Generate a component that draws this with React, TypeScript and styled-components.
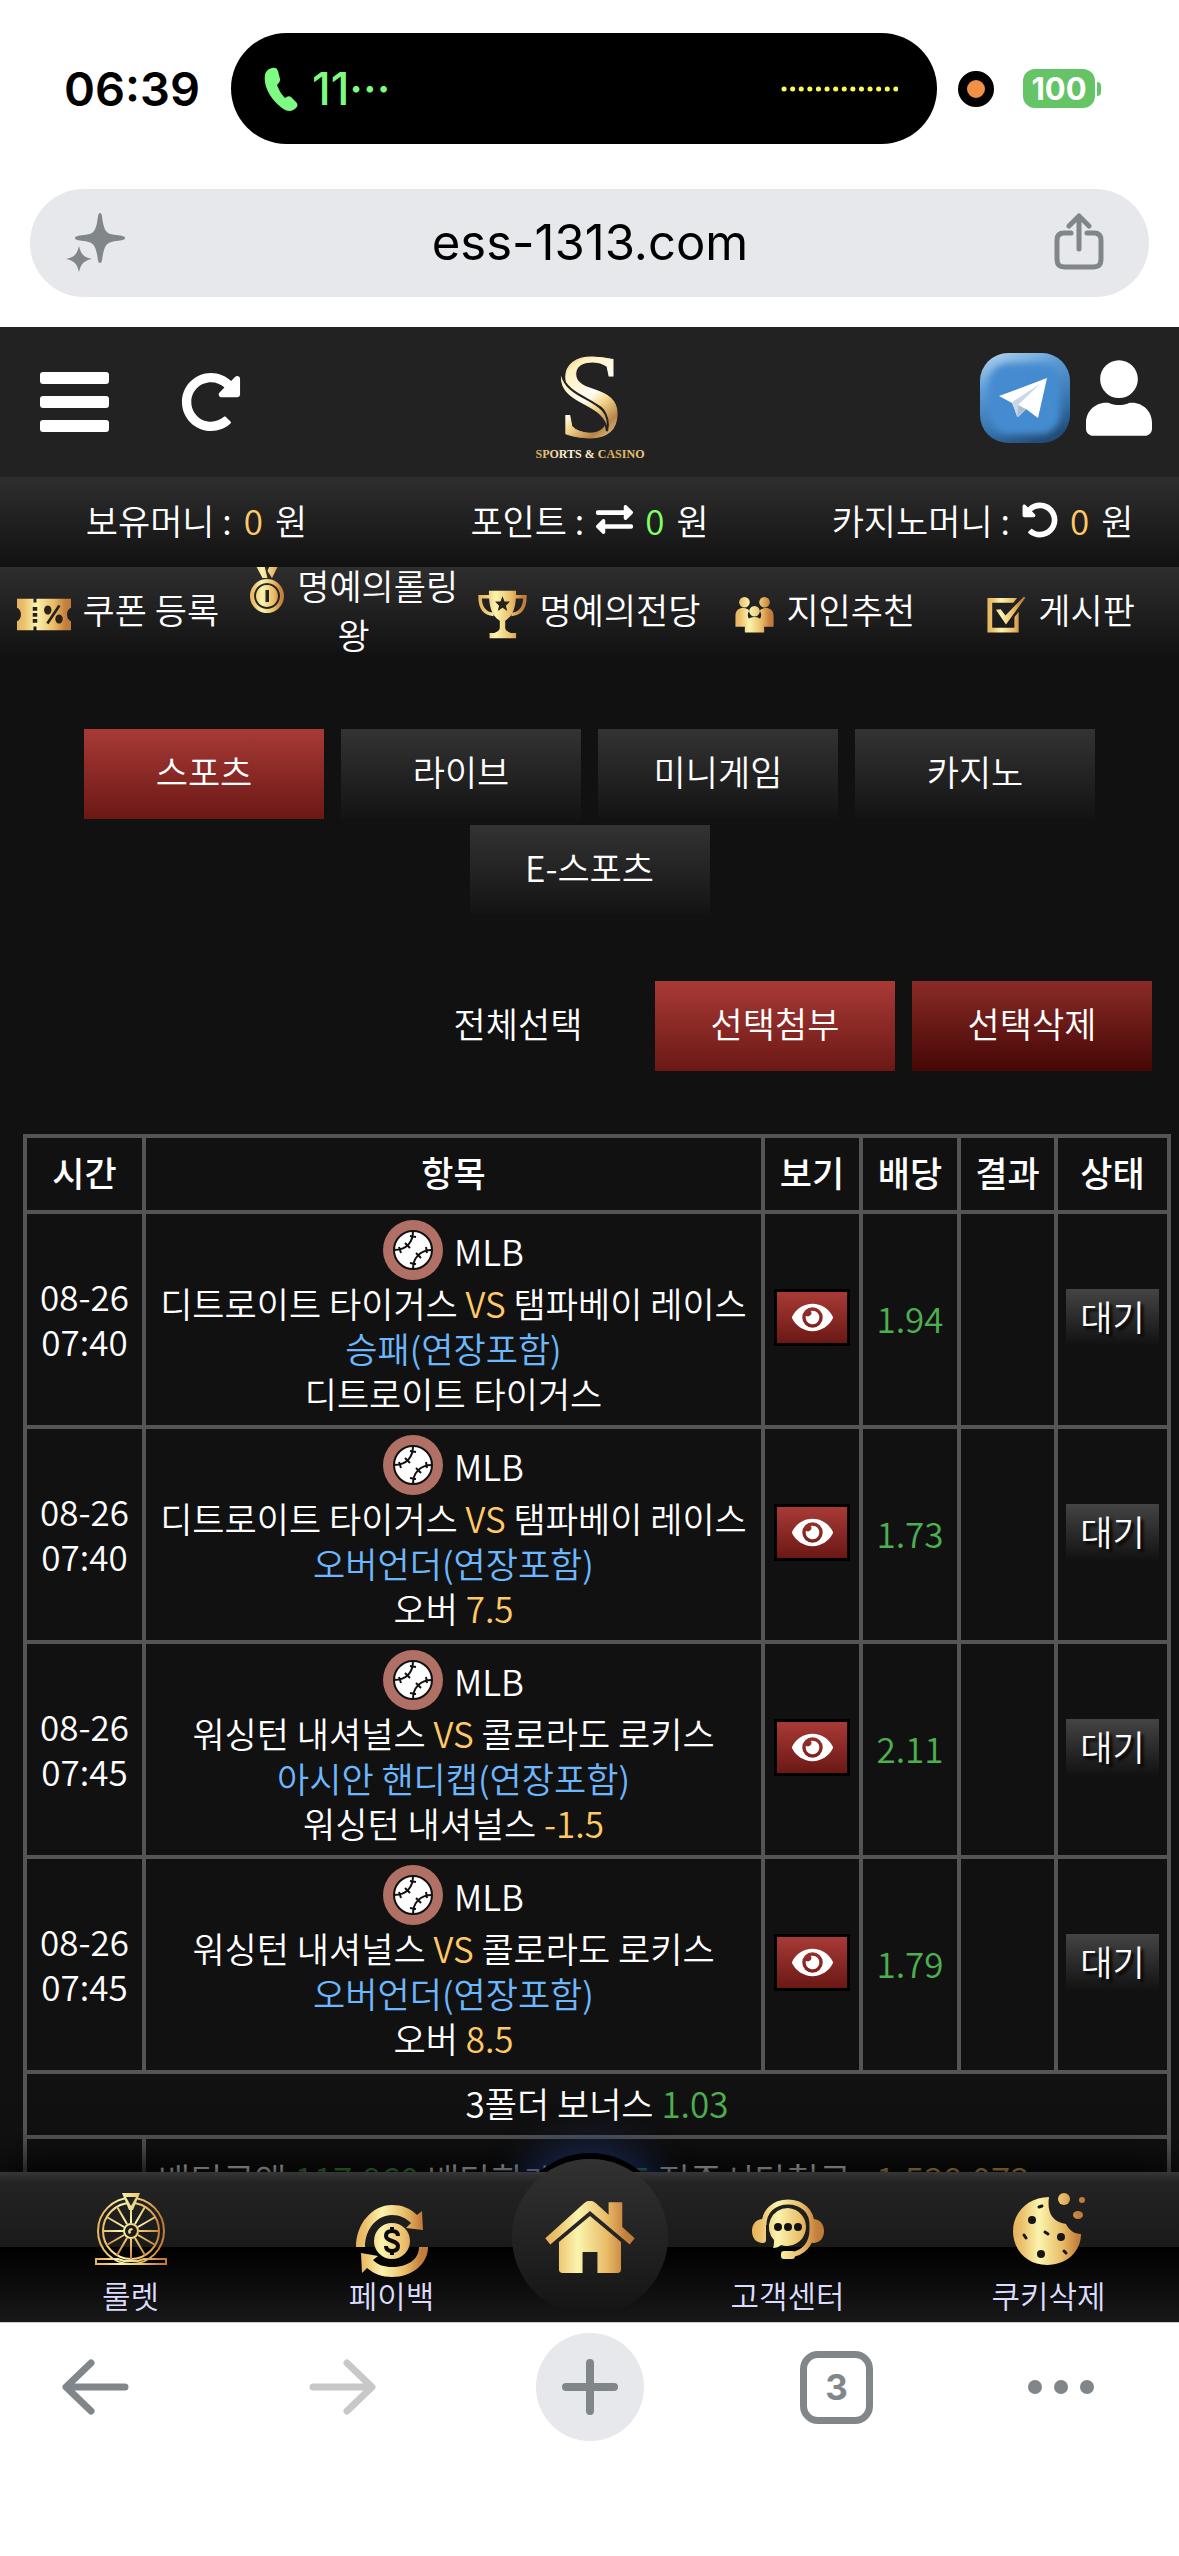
import { Fragment, ReactNode } from 'react';
import styled, { createGlobalStyle, css } from 'styled-components';
import { FaExchangeAlt, FaEye, FaRedoAlt, FaUndoAlt, FaUser } from 'react-icons/fa';

const LATIN_FONT = 'Inter, "Noto Sans CJK KR", sans-serif';
const KOREAN_FONT = '"Noto Sans CJK KR", "Noto Sans", sans-serif';

const COLORS = {
	page: '#111',
	header: '#222',
	line: '#555',
	gold: '#ffc966',
	lime: '#80ff66',
	green: '#4caf50',
	blue: '#6cb8ff',
	chrome: '#e7e8ec',
	chromeIcon: '#80868a',
};

const GlobalStyle = createGlobalStyle`
	* { box-sizing: border-box; }
	body {
		margin: 0;
		background: #fff;
	}
	button {
		margin: 0;
		padding: 0;
		border: 0;
		background: none;
		color: inherit;
		font: inherit;
		cursor: pointer;
	}
	a {
		color: inherit;
		text-decoration: none;
	}
	svg { display: block; }
`;

const Screen = styled.div`
	display: flex;
	flex-direction: column;
	height: 100vh;
	overflow: hidden;
	font-family: ${LATIN_FONT};
`;

/* ---------- phone status bar ---------- */

const StatusBar = styled.header`
	display: grid;
	grid-template-columns: 231px 1fr 242px;
	align-items: center;
	padding-top: 33px;
`;

const Clock = styled.time`
	padding-left: 64px;
	font-size: 47px;
	font-weight: 600;
	line-height: 60px;
`;

const Island = styled.div`
	display: flex;
	align-items: center;
	justify-content: space-between;
	height: 111px;
	padding: 0 39px 0 33px;
	border-radius: 56px;
	background: #000;
`;

const Call = styled.span`
	display: flex;
	align-items: center;
	gap: 14px;
	color: #7dfb83;
	font-size: 45px;
	font-weight: 500;
`;

const StatusRight = styled.div`
	display: flex;
	align-items: center;
	gap: 29px;
	padding-left: 21px;
`;

const MicDot = styled.span`
	width: 36px;
	height: 36px;
	border: 9px solid #000;
	border-radius: 50%;
	background: #f09145;
`;

const BatteryWrap = styled.span`
	display: flex;
	align-items: center;
	gap: 2px;
`;

const BatteryBody = styled.span`
	width: 72px;
	height: 39px;
	border-radius: 12px;
	background: #65c466;
	color: #fff;
	font-size: 31px;
	font-weight: 700;
	line-height: 39px;
	text-align: center;
`;

const BatteryTip = styled.span`
	width: 4px;
	height: 14px;
	border-radius: 0 4px 4px 0;
	background: #65c466;
`;

/* ---------- address bar ---------- */

const AddressBar = styled.div`
	display: flex;
	align-items: center;
	justify-content: space-between;
	height: 108px;
	margin: 45px 30px 30px;
	padding: 0 45px 2px 36px;
	border-radius: 54px;
	background: ${COLORS.chrome};
	color: #000;
	font-size: 49px;
`;

/* ---------- site ---------- */

const Site = styled.main`
	flex: 1;
	min-height: 0;
	overflow: hidden;
	background: ${COLORS.page};
	color: #fff;
	font-family: ${KOREAN_FONT};
	font-size: 35px;
	font-weight: 350;
	line-height: 45px;
`;

const SiteHeader = styled.div`
	display: grid;
	grid-template-columns: 1fr auto 1fr;
	align-items: center;
	height: 150px;
	padding: 0 27px;
	background: ${COLORS.header};
`;

const HeaderGroup = styled.div<{ $end?: boolean }>`
	display: flex;
	align-items: center;
	${({ $end }) => ($end ? css`
		justify-content: flex-end;
		gap: 16px;
		padding-bottom: 8px;
	` : css`
		gap: 72px;
		padding-left: 13px;
	`)}
`;

const barGradient = css`
	background: linear-gradient(#2e2e2e, #111);
`;

const MoneyBar = styled.div`
	display: grid;
	grid-template-columns: repeat(3, 1fr);
	height: 90px;
	padding-bottom: 5px;
	${barGradient}
`;

const Money = styled.div`
	display: flex;
	align-items: center;
	justify-content: center;
	gap: 12px;
`;

const MenuBar = styled.nav`
	display: grid;
	grid-template-rows: 100%;
	grid-template-columns: repeat(5, 1fr);
	align-items: center;
	height: 90px;
	padding-bottom: 7px;
	overflow: hidden;
	line-height: 49px;
	text-align: center;
	${barGradient}
	svg {
		display: inline-block;
		margin: -12px 12px -12px 0;
		vertical-align: middle;
	}
`;

const Tabs = styled.div`
	display: flex;
	flex-wrap: wrap;
	justify-content: center;
	gap: 6px 17px;
	padding-top: 72px;
`;

const Actions = styled.div`
	display: flex;
	justify-content: flex-end;
	gap: 17px;
	padding: 66px 27px 63px;
`;

const fills = {
	none: 'none',
	dark: 'linear-gradient(#333, #131313)',
	red: 'linear-gradient(#a83a36, #6b1815)',
	deep: 'linear-gradient(#8a2b28, #450704)',
};

const BoxButton = styled.button<{ $fill: keyof typeof fills }>`
	width: 240px;
	height: 90px;
	padding-bottom: 8px;
	background: ${({ $fill }) => fills[$fill]};
`;

const Gold = styled.span`
	color: ${COLORS.gold};
`;

const Lime = styled.span`
	color: ${COLORS.lime};
`;

const Green = styled.span`
	color: ${COLORS.green};
`;

const Blue = styled.span`
	color: ${COLORS.blue};
`;

/* ---------- bet table ---------- */

const BetTable = styled.table`
	width: calc(100% - 31px);
	margin-left: 23px;
	border-collapse: collapse;
	table-layout: fixed;
	text-align: center;
	white-space: nowrap;
`;

const Col = styled.col<{ $width?: number }>`
	width: ${({ $width }) => ($width ? `${$width}px` : 'auto')};
`;

const HeadCell = styled.th`
	padding: 11px 0 16px;
	border: 4px solid ${COLORS.line};
	font-weight: 500;
`;

const Cell = styled.td<{ $summary?: boolean }>`
	padding: 6px 0 10px;
	border: 4px solid ${COLORS.line};
	${({ $summary }) => $summary && css`
		padding: 17px 12px 21px;
		text-align: left;
	`}
`;

const League = styled.div`
	display: flex;
	align-items: center;
	justify-content: center;
	gap: 11px;
	height: 60px;
`;

const ViewButton = styled.button`
	display: inline-flex;
	align-items: center;
	justify-content: center;
	width: 76px;
	height: 57px;
	border: 3px solid #000;
	background: ${fills.red};
	vertical-align: middle;
`;

const Status = styled.span`
	display: inline-block;
	width: 93px;
	height: 57px;
	background: linear-gradient(#444, #111);
	line-height: 54px;
	text-shadow: 3px 3px 3px #000;
	vertical-align: middle;
`;

/* ---------- site bottom nav ---------- */

const BottomNav = styled.nav`
	position: relative;
	z-index: 1;
	display: flex;
	height: 150px;
	background:
		linear-gradient(#363636, rgba(54, 54, 54, 0) 10px),
		linear-gradient(#252525, #1a1a1a 50%, #000 50%, #181818);
	box-shadow: 0 -8px 40px #000;
	color: #dcdcff;
	font-family: ${KOREAN_FONT};
	font-size: 31px;
	font-weight: 350;
	line-height: 36px;
`;

const NavLink = styled.a`
	display: flex;
	flex: 1;
	flex-direction: column;
	align-items: center;
	padding-top: 21px;
`;

const HomeSlot = styled.div`
	position: relative;
	width: 135px;
`;

const HomeLink = styled.a`
	position: absolute;
	top: -13px;
	left: 50%;
	display: flex;
	align-items: center;
	justify-content: center;
	width: 156px;
	height: 156px;
	margin-left: -78px;
	border-radius: 50%;
	background: linear-gradient(#323232, #141414);
	&::before {
		content: '';
		position: absolute;
		inset: 0;
		z-index: -1;
		border-radius: 50%;
		box-shadow: 0 -6px 0 #000, 0 -10px 36px 6px rgba(35, 60, 130, 0.55);
		clip-path: inset(-70px -70px 143px);
	}
`;

/* ---------- browser toolbar ---------- */

const Toolbar = styled.footer`
	position: relative;
	z-index: 2;
	display: grid;
	grid-template-columns: 219px 1fr 1fr 1fr 219px;
	align-items: center;
	justify-items: center;
	padding: 10px 0 115px;
	border-top: 1px solid #ccc;
	background: #fff;
	color: ${COLORS.chromeIcon};
	> :first-child {
		justify-self: start;
		margin-left: 62px;
	}
	> :last-child {
		justify-self: end;
		margin-right: 84px;
	}
`;

const NewTab = styled.button`
	display: flex;
	align-items: center;
	justify-content: center;
	width: 108px;
	height: 108px;
	border-radius: 50%;
	background: ${COLORS.chrome};
`;

const TabCount = styled.button`
	width: 73px;
	height: 73px;
	border: 7px solid ${COLORS.chromeIcon};
	border-radius: 18px;
	font-size: 35px;
	font-weight: 700;
	line-height: 58px;
`;

/* ---------- drawings ---------- */

const GoldDefs = () => (
	<svg width="0" height="0" aria-hidden="true" style={{ position: 'absolute' }}>
		<defs>
			<linearGradient id="gold" gradientUnits="userSpaceOnUse" x1="0" y1="0" x2="72" y2="0">
				<stop offset="0" stopColor="#e6b25c" />
				<stop offset="0.12" stopColor="#ecc06a" />
				<stop offset="0.36" stopColor="#fbf4ae" />
				<stop offset="0.68" stopColor="#e9bd68" />
				<stop offset="0.9" stopColor="#c47f3c" />
				<stop offset="1" stopColor="#bd7a38" />
			</linearGradient>
			<linearGradient id="logoGold" gradientUnits="userSpaceOnUse" x1="26" y1="12" x2="94" y2="94">
				<stop offset="0" stopColor="#d9a94f" />
				<stop offset="0.2" stopColor="#fff0bd" />
				<stop offset="0.5" stopColor="#fffdf4" />
				<stop offset="0.62" stopColor="#f3d68a" />
				<stop offset="0.8" stopColor="#b9854a" />
				<stop offset="1" stopColor="#f4df9e" />
			</linearGradient>
			<linearGradient id="logoText" x1="0" y1="0" x2="1" y2="0">
				<stop offset="0" stopColor="#d9a94f" />
				<stop offset="0.3" stopColor="#fff8e0" />
				<stop offset="0.5" stopColor="#fff1c4" />
				<stop offset="0.65" stopColor="#d9a94f" />
				<stop offset="1" stopColor="#e9ca80" />
			</linearGradient>
		</defs>
	</svg>
);

type GoldIconProps = { width: number, height: number, box?: number, children: ReactNode };

const GoldIcon = ({ width, height, box = 72, children }: GoldIconProps) => (
	<svg width={width} height={height} viewBox={`0 0 72 ${box}`} fill="url(#gold)" aria-hidden="true">
		{children}
	</svg>
);

const CouponIcon = () => (
	<GoldIcon width={54} height={33} box={44}>
		<path d="M0 1h22v5h4V1h46v12c-7 2-7 16 0 18v12H26v-5h-4v5H0V31c7-2 7-16 0-18z" />
		<g fill="#2a2118">
			<path d="M21 12h6v5h-6zM21 20h6v5h-6zM21 28h6v5h-6zM55 9l3 2-16 24-3-2z" />
			<path d="M41 10a5 6 0 1 0 .1 0zM56 22a5 6 0 1 0 .1 0z" />
		</g>
	</GoldIcon>
);

const MedalIcon = () => (
	<GoldIcon width={36} height={48} box={96}>
		<path d="M14 0h17l6 24h-10zM41 0h17L46 24l-9-14z" />
		<path fillRule="evenodd" d="M36 26a34 34 0 1 1-.1 0zM36 34a26 26 0 1 0 .1 0z" />
		<path fillRule="evenodd" d="M36 38a22 22 0 1 1-.1 0zM33 48v24h7V48z" />
	</GoldIcon>
);

const TrophyIcon = () => (
	<GoldIcon width={49} height={49}>
		<path fill="none" stroke="url(#gold)" strokeWidth="5" d="M18 10H3c0 16 7 25 20 26M54 10h15c0 16-7 25-20 26" />
		<path d="M16 1h40c0 22-3 36-16 44v10c0 5 5 6 8 8h8v8H17v-8h7c4-2 8-3 8-8V45C19 37 16 23 16 1z" />
		<path fill="#2a2118" d="M36 9l3 8h8l-6 6 2 8-7-5-7 5 2-8-6-6h8z" />
	</GoldIcon>
);

const PeopleIcon = () => (
	<GoldIcon width={39} height={36} box={68}>
		<circle cx="17" cy="10" r="10" />
		<circle cx="55" cy="10" r="10" />
		<path d="M0 56V36c0-10 6-15 15-15 6 0 10 3 11 5-5 8-2 14 2 18-7 3-9 8-9 12zM72 56V36c0-10-6-15-15-15-6 0-10 3-11 5 5 8 2 14-2 18 7 3 9 8 9 12z" />
		<circle cx="36" cy="27" r="10" />
		<path d="M18 67c-2-18 5-29 18-29s20 11 18 29z" />
	</GoldIcon>
);

const CheckIcon = () => (
	<GoldIcon width={39} height={36} box={68}>
		<path d="M0 2h56l-7 9H9v47h42V38l8-10v39H0z" />
		<path d="M16 24l9-1 9 12L68 0l4 1-37 51z" />
	</GoldIcon>
);

const SPOKES = [0, 30, 60, 90, 120, 150];

const RouletteIcon = () => (
	<GoldIcon width={72} height={84} box={84}>
		<g fill="none" stroke="url(#gold)" strokeWidth="2">
			<circle cx="36" cy="38" r="33" />
			<circle cx="36" cy="38" r="28" />
			<circle cx="36" cy="38" r="7" />
			{SPOKES.map((angle) => (
				<path key={angle} d="M44 38h20M8 38h20" transform={`rotate(${angle} 36 38)`} />
			))}
			<path d="M1 66h22l6 2h14l6-2h22v5H1z" />
		</g>
		<path d="M27 0h18l-7 17h-4z" />
		<path fill="#222" d="M31 4h10l-5 9z" />
		<path d="M34 41c-2-3 0-6 3-6l1 2c-2 0-3 1-2 3z" />
	</GoldIcon>
);

const PaybackIcon = () => (
	<GoldIcon width={72} height={84} box={84}>
		<path d="M0 54c0-23 16-42 36-42 10 0 18 3 25 10l5-4 1 19-17-2 5-5c-5-5-11-8-19-8C21 22 9 36 9 54z" />
		<path d="M72 54c0 17-16 30-36 30-10 0-18-3-25-9l-5 5-1-20 17 3-5 4c5 5 11 7 19 7 15 0 27-7 27-20z" />
		<circle cx="36" cy="48" r="18" />
		<path
			fill="none"
			stroke="#0b0b0b"
			strokeWidth="4"
			d="M42 43c0-4-3-5-6-5-4 0-6 2-6 5 0 6 12 4 12 10 0 3-2 5-6 5-3 0-6-1-6-5M36 34v5M36 57v5"
		/>
	</GoldIcon>
);

const SupportIcon = () => (
	<GoldIcon width={72} height={84} box={84}>
		<path fill="none" stroke="url(#gold)" strokeWidth="5" d="M12 32C12 18 22 9 36 9s24 9 24 23v4c0 16-9 24-22 26" />
		<rect x="29" y="58" width="14" height="8" rx="3" />
		<path d="M11 26c2 0 3 1 3 3v18c0 2-1 3-3 3C4 50 0 45 0 38s4-12 11-12zM61 26c-2 0-3 1-3 3v18c0 2 1 3 3 3 7 0 11-5 11-12s-4-12-11-12z" />
		<path d="M36 15a19 19 0 1 1-7 37c-2 2-5 3-8 3 1-3 1-5 1-8A19 19 0 0 1 36 15z" />
		<g fill="#111">
			<circle cx="26" cy="34" r="4" />
			<circle cx="36" cy="34" r="4" />
			<circle cx="46" cy="34" r="4" />
		</g>
	</GoldIcon>
);

const CookieIcon = () => (
	<GoldIcon width={72} height={84} box={84}>
		<path d="M36 4c-2 14 2 25 17 27 3 6 8 10 15 10 0 17-14 31-34 31C14 72 0 57 0 38S16 4 36 4z" />
		<circle cx="51" cy="6" r="6" />
		<circle cx="69" cy="7" r="3" />
		<ellipse cx="65" cy="22" rx="5" ry="4" />
		<g fill="#161616">
			<circle cx="19" cy="27" r="4" />
			<circle cx="48" cy="44" r="4" />
			<circle cx="28" cy="61" r="4" />
		</g>
		<path
			fill="none"
			stroke="#161616"
			strokeWidth="3"
			strokeLinecap="round"
			d="M26 14l3-1M11 42l2 3M32 39l3 2M51 58l2 2"
		/>
	</GoldIcon>
);

const HomeIcon = () => (
	<GoldIcon width={90} height={72} box={58}>
		<path d="M31 2c3-3 7-3 10 0l10 9V1h11v20l10 9-4 5-32-27L4 35l-4-5z" />
		<path d="M36 12l25 21v22c0 2-1 3-3 3H42V41H30v17H14c-2 0-3-1-3-3V33z" />
	</GoldIcon>
);

const Logo = () => (
	<svg width="120" height="118" viewBox="0 0 120 118" role="img" aria-label="S Sports & Casino">
		<text x="61" y="94" fill="url(#logoGold)" stroke="url(#logoGold)" fontFamily="Liberation Serif, serif" fontSize="120" textAnchor="middle">S</text>
		<path
			d="M31 27c1 13 9 20 22 27s29 14 24 34c-2-15-13-20-26-27S26 45 31 27z"
			fill="url(#logoGold)"
			stroke={COLORS.header}
			strokeWidth="2"
		/>
		<text x="60" y="115" fill="url(#logoText)" fontFamily="Liberation Serif, serif" fontSize="12" fontWeight="700" textAnchor="middle">SPORTS &amp; CASINO</text>
	</svg>
);

const MenuIcon = () => (
	<svg width="69" height="60" viewBox="0 0 69 60" fill="currentColor" aria-hidden="true">
		<rect width="69" height="12" rx="3" />
		<rect y="24" width="69" height="12" rx="3" />
		<rect y="48" width="69" height="12" rx="3" />
	</svg>
);

const TelegramIcon = () => (
	<svg width="90" height="90" viewBox="0 0 90 90" aria-hidden="true">
		<defs>
			<linearGradient id="telegramEdge" x1="0.2" y1="0" x2="0.6" y2="1">
				<stop offset="0" stopColor="#a9cdec" />
				<stop offset="0.3" stopColor="#5b9bd6" />
				<stop offset="0.75" stopColor="#3470aa" />
				<stop offset="1" stopColor="#234d78" />
			</linearGradient>
			<filter id="telegramBlur" x="-20%" y="-20%" width="140%" height="140%">
				<feGaussianBlur stdDeviation="3" />
			</filter>
		</defs>
		<rect width="90" height="90" rx="28" fill="url(#telegramEdge)" />
		<rect x="9" y="11" width="71" height="70" rx="20" fill="#448bd0" filter="url(#telegramBlur)" />
		<path d="M19 43l48-18-9 40-12-9-8 8-6-14z" fill="#fff" />
		<path d="M32 49l28-18-22 21-1 12z" fill="#c8d8e8" />
		<path d="M38 52l-1 12 9-8z" fill="#a9bfd2" />
	</svg>
);

const BaseballIcon = () => (
	<svg width="60" height="60" viewBox="0 0 60 60" aria-hidden="true">
		<circle cx="30" cy="30" r="30" fill="#b07065" />
		<circle cx="30" cy="30" r="19" fill="#fff" stroke="#111" strokeWidth="2" />
		<path
			d="M30 11c0 11-6 19-19 19M49 30c-12 0-19 8-19 19M27 16l6 1M22 23l5 5M16 27l2 6M43 27l1 6M33 33l5 5M27 43l6 1"
			fill="none"
			stroke="#111"
			strokeWidth="2"
		/>
	</svg>
);

const PhoneIcon = () => (
	<svg width="34" height="44" viewBox="0 0 34 44" fill="currentColor" aria-hidden="true">
		<path d="M8 1c3-1 5 0 6 3l2 8c0 2 0 3-3 6 2 5 4 9 8 13 3-2 4-2 6-1l5 5c2 2 2 4 0 6-4 4-9 4-14 0C7 33-1 19 1 8 2 4 4 2 8 1z" />
	</svg>
);

const VoiceDots = () => (
	<svg width="117" height="6" viewBox="0 0 117 6" aria-hidden="true">
		<path d="M3 3h114" stroke="#fdfb55" strokeWidth="5" strokeLinecap="round" strokeDasharray="0.1 8.5" />
	</svg>
);

const SparkleIcon = () => (
	<svg width="60" height="60" viewBox="0 0 60 60" fill={COLORS.chromeIcon} aria-hidden="true">
		<path d="M34 1c2 0 2 4 3 10 2 9 4 11 13 12 6 1 9 1 9 3s-3 2-9 3c-9 1-11 4-13 13-1 6-1 9-3 9s-2-3-3-9c-2-9-4-12-13-13-6-1-9-1-9-3s3-2 9-3c9-1 11-3 13-12 1-6 1-10 3-10z" />
		<path d="M13 34c2 7 3 11 13 13-10 2-11 6-13 13-2-7-3-11-13-13 10-2 11-6 13-13z" />
	</svg>
);

const ShareIcon = () => (
	<svg width="50" height="58" viewBox="0 0 50 58" fill="none" stroke={COLORS.chromeIcon} strokeWidth="5" strokeLinecap="round" strokeLinejoin="round" aria-hidden="true">
		<path d="M17 20h-7c-5 0-7 3-7 7v19c0 6 3 8 8 8h28c5 0 8-2 8-8V27c0-4-2-7-7-7h-7M25 36V4M15 13L25 3l10 10" />
	</svg>
);

const ArrowIcon = ({ forward }: { forward?: boolean }) => (
	<svg width="67" height="56" viewBox="0 0 67 56" fill="none" stroke={forward ? '#c8c8c8' : COLORS.chromeIcon} strokeWidth="7" strokeLinecap="round" strokeLinejoin="round" aria-hidden="true">
		<path d={forward ? 'M4 28h58M38 4l25 24-25 24' : 'M63 28H5M29 4L4 28l25 24'} />
	</svg>
);

/* ---------- data ---------- */

const MENU = [
	{ icon: <CouponIcon />, label: '쿠폰 등록' },
	{ icon: <MedalIcon />, label: '명예의롤링', rest: '왕' },
	{ icon: <TrophyIcon />, label: '명예의전당' },
	{ icon: <PeopleIcon />, label: '지인추천' },
	{ icon: <CheckIcon />, label: '게시판' },
];

const TABS = ['스포츠', '라이브', '미니게임', '카지노', 'E-스포츠'];

const BETS = [
	{ time: '07:40', home: '디트로이트 타이거스', away: '탬파베이 레이스', market: '승패(연장포함)', pick: '디트로이트 타이거스', odds: '1.94' },
	{ time: '07:40', home: '디트로이트 타이거스', away: '탬파베이 레이스', market: '오버언더(연장포함)', pick: '오버', line: '7.5', odds: '1.73' },
	{ time: '07:45', home: '워싱턴 내셔널스', away: '콜로라도 로키스', market: '아시안 핸디캡(연장포함)', pick: '워싱턴 내셔널스', line: '-1.5', odds: '2.11' },
	{ time: '07:45', home: '워싱턴 내셔널스', away: '콜로라도 로키스', market: '오버언더(연장포함)', pick: '오버', line: '8.5', odds: '1.79' },
];

const App = () => (
	<Screen>
		<GlobalStyle />
		<GoldDefs />
		<StatusBar>
			<Clock>06:39</Clock>
			<Island>
				<Call>
					<PhoneIcon />
					11···
				</Call>
				<VoiceDots />
			</Island>
			<StatusRight>
				<MicDot />
				<BatteryWrap>
					<BatteryBody>100</BatteryBody>
					<BatteryTip />
				</BatteryWrap>
			</StatusRight>
		</StatusBar>
		<AddressBar>
			<button type="button" aria-label="AI"><SparkleIcon /></button>
			<span>ess-1313.com</span>
			<button type="button" aria-label="Share"><ShareIcon /></button>
		</AddressBar>

		<Site>
			<SiteHeader>
				<HeaderGroup>
					<button type="button" aria-label="메뉴"><MenuIcon /></button>
					<button type="button" aria-label="새로고침"><FaRedoAlt size={60} /></button>
				</HeaderGroup>
				<Logo />
				<HeaderGroup $end>
					<a href="#telegram" aria-label="Telegram"><TelegramIcon /></a>
					<a href="#user" aria-label="내 정보"><FaUser size={76} style={{ width: 66 }} /></a>
				</HeaderGroup>
			</SiteHeader>
			<MoneyBar>
				<Money>
					<span>보유머니 :</span>
					<Gold>0</Gold>
					<span>원</span>
				</Money>
				<Money>
					<span>포인트 :</span>
					<button type="button" aria-label="전환"><FaExchangeAlt size={37} /></button>
					<Lime>0</Lime>
					<span>원</span>
				</Money>
				<Money>
					<span>카지노머니 :</span>
					<button type="button" aria-label="갱신"><FaUndoAlt size={36} /></button>
					<Gold>0</Gold>
					<span>원</span>
				</Money>
			</MoneyBar>
			<MenuBar>
				{MENU.map(({ icon, label, rest }) => (
					<a key={label} href="#menu">
						{icon}
						{label}
						{rest && <Fragment><br />{rest}</Fragment>}
					</a>
				))}
			</MenuBar>

			<Tabs>
				{TABS.map((tab, index) => (
					<BoxButton key={tab} type="button" $fill={index === 0 ? 'red' : 'dark'}>{tab}</BoxButton>
				))}
			</Tabs>
			<Actions>
				<BoxButton type="button" $fill="none">전체선택</BoxButton>
				<BoxButton type="button" $fill="red">선택첨부</BoxButton>
				<BoxButton type="button" $fill="deep">선택삭제</BoxButton>
			</Actions>

			<BetTable>
				<colgroup>
					<Col $width={119} />
					<Col />
					<Col $width={98} />
					<Col $width={98} />
					<Col $width={97} />
					<Col $width={113} />
				</colgroup>
				<thead>
					<tr>
						<HeadCell>시간</HeadCell>
						<HeadCell>항목</HeadCell>
						<HeadCell>보기</HeadCell>
						<HeadCell>배당</HeadCell>
						<HeadCell>결과</HeadCell>
						<HeadCell>상태</HeadCell>
					</tr>
				</thead>
				<tbody>
					{BETS.map(({ time, home, away, market, pick, line, odds }) => (
						<tr key={odds}>
							<Cell>
								08-26
								<br />
								{time}
							</Cell>
							<Cell>
								<League>
									<BaseballIcon />
									MLB
								</League>
								<div>{home} <Gold>VS</Gold> {away}</div>
								<div><Blue>{market}</Blue></div>
								<div>{pick} {line && <Gold>{line}</Gold>}</div>
							</Cell>
							<Cell>
								<ViewButton type="button" aria-label="보기"><FaEye size={41} /></ViewButton>
							</Cell>
							<Cell><Green>{odds}</Green></Cell>
							<Cell />
							<Cell><Status>대기</Status></Cell>
						</tr>
					))}
					<tr>
						<Cell colSpan={6}>3폴더 보너스 <Green>1.03</Green></Cell>
					</tr>
					<tr>
						<Cell />
						<Cell colSpan={5} $summary>
							배팅금액 <Green>117,860</Green> 배당합계 <Green>13.05</Green> 적중시당첨금 : <Gold>1,538,073</Gold>
						</Cell>
					</tr>
				</tbody>
			</BetTable>
		</Site>

		<BottomNav>
			<NavLink href="#roulette"><RouletteIcon />룰렛</NavLink>
			<NavLink href="#payback"><PaybackIcon />페이백</NavLink>
			<HomeSlot>
				<HomeLink href="#home" aria-label="홈"><HomeIcon /></HomeLink>
			</HomeSlot>
			<NavLink href="#support"><SupportIcon />고객센터</NavLink>
			<NavLink href="#cookie"><CookieIcon />쿠키삭제</NavLink>
		</BottomNav>

		<Toolbar>
			<button type="button" aria-label="Back"><ArrowIcon /></button>
			<button type="button" aria-label="Forward"><ArrowIcon forward /></button>
			<NewTab type="button" aria-label="New tab">
				<svg width="56" height="56" viewBox="0 0 56 56" stroke="currentColor" strokeWidth="8" strokeLinecap="round" aria-hidden="true">
					<path d="M28 4v48M4 28h48" />
				</svg>
			</NewTab>
			<TabCount type="button">3</TabCount>
			<button type="button" aria-label="More">
				<svg width="68" height="16" viewBox="0 0 68 16" fill="currentColor" aria-hidden="true">
					<circle cx="8" cy="8" r="7" />
					<circle cx="34" cy="8" r="7" />
					<circle cx="60" cy="8" r="7" />
				</svg>
			</button>
		</Toolbar>
	</Screen>
);

export default App;
